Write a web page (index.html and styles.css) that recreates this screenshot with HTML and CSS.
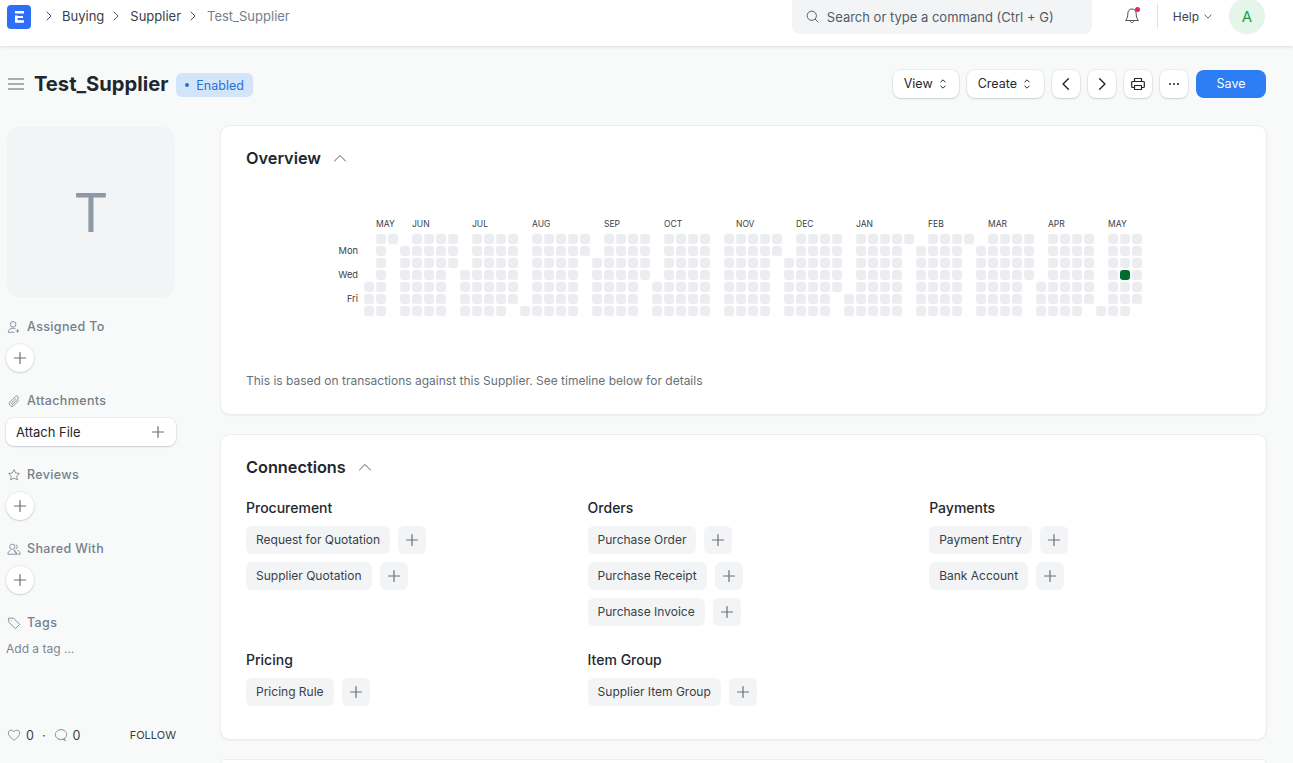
FILE: index.html
```html
<!DOCTYPE html>
<html lang="en">

<head>
  <title>Test_Supplier</title>
  <meta charset="utf-8" />
  <link rel="stylesheet" href="styles.css">
  <script src="heatmap.js" defer></script>
</head>

<body>
  <svg class="sprite" aria-hidden="true">
    <symbol id="icon-plus" viewBox="0 0 16 16">
      <path d="M8 2.500v11M2.500 8h11" fill="none" stroke="currentColor" stroke-width="1.200" stroke-linecap="round" />
    </symbol>
    <symbol id="icon-chevron" viewBox="0 0 12 12">
      <path d="M4 2l4 4-4 4" fill="none" stroke="currentColor" stroke-width="1" stroke-linecap="round" stroke-linejoin="round" />
    </symbol>
    <symbol id="icon-up" viewBox="0 0 14 8">
      <path d="M1.500 7L7 1.500 12.500 7" fill="none" stroke="currentColor" stroke-width="1" stroke-linecap="round" stroke-linejoin="round" />
    </symbol>
    <symbol id="icon-updown" viewBox="0 0 8 14">
      <path d="M1.800 5L4 2.800 6.200 5M1.800 9L4 11.200 6.200 9" fill="none" stroke="currentColor" stroke-width="1" stroke-linecap="round" stroke-linejoin="round" />
    </symbol>
  </svg>

  <header class="navbar">
    <div class="nav-left">
      <svg class="logo" viewBox="0 0 24 24">
        <rect width="24" height="24" rx="4" fill="#2d6ff6" />
        <path d="M8 6h9v2.500H8zM8 10.500h2.500V11H16v2h-5.500v2.300H17v2.400H8z" fill="#fff" />
      </svg>
      <nav class="crumbs">
        <svg class="crumb-sep"><use href="#icon-chevron" /></svg>
        <a>Buying</a>
        <svg class="crumb-sep"><use href="#icon-chevron" /></svg>
        <a>Supplier</a>
        <svg class="crumb-sep"><use href="#icon-chevron" /></svg>
        <a class="current">Test_Supplier</a>
      </nav>
    </div>
    <div class="nav-right">
      <div class="search">
        <svg class="search-icon" viewBox="0 0 14 14">
          <circle cx="6.200" cy="6.200" r="5" fill="none" stroke="currentColor" />
          <path d="M10 10l3 3" stroke="currentColor" stroke-linecap="round" />
        </svg>
        <span>Search or type a command (Ctrl + G)</span>
      </div>
      <div class="bell">
        <svg viewBox="0 0 16 18" width="16" height="18">
          <path d="M8 2c-2.800 0-4.200 2.200-4.200 4.800 0 3.200-.7 5-2.300 6.700h13c-1.600-1.700-2.300-3.500-2.300-6.700C12.200 4.200 10.800 2 8 2zM6.200 13.800c.1 2.400 3.500 2.400 3.600 0" fill="none" stroke="#4c5560" stroke-linejoin="round" />
        </svg>
        <span class="bell-dot"></span>
      </div>
      <div class="nav-divider"></div>
      <div class="help">Help
        <svg class="help-chevron" viewBox="0 0 10 6"><path d="M1 1l4 4 4-4" fill="none" stroke="currentColor" stroke-linecap="round" stroke-linejoin="round" /></svg>
      </div>
      <div class="avatar">A</div>
    </div>
  </header>

  <div class="page-head">
    <div class="page-title">
      <svg class="menu-icon" viewBox="0 0 16 12">
        <path d="M0 1h16M0 6h16M0 11h16" stroke="currentColor" stroke-width="1.500" />
      </svg>
      <h1>Test_Supplier</h1>
      <span class="badge"><i class="badge-dot"></i>Enabled</span>
    </div>
    <div class="actions">
      <button class="btn">View <svg class="updown"><use href="#icon-updown" /></svg></button>
      <button class="btn btn-create">Create <svg class="updown"><use href="#icon-updown" /></svg></button>
      <button class="btn btn-icon">
        <svg viewBox="0 0 12 12" width="14" height="14"><path d="M8 1.500L3.500 6 8 10.500" fill="none" stroke="#1f272e" stroke-width="1.200" stroke-linecap="round" stroke-linejoin="round" /></svg>
      </button>
      <button class="btn btn-icon">
        <svg viewBox="0 0 12 12" width="14" height="14"><path d="M4 1.500L8.500 6 4 10.500" fill="none" stroke="#1f272e" stroke-width="1.200" stroke-linecap="round" stroke-linejoin="round" /></svg>
      </button>
      <button class="btn btn-icon">
        <svg viewBox="0 0 14 14" width="14" height="14"><path d="M3.500 4.500V1.500h7v3M3.500 10.500H1.500a.8.8 0 0 1-.8-.8V5.300a.8.8 0 0 1 .8-.8h11a.8.8 0 0 1 .8.8v4.400a.8.8 0 0 1-.8.8h-2M3.500 8.500h7v4h-7z" fill="none" stroke="#1f272e" stroke-width="1.200" stroke-linejoin="round" /></svg>
      </button>
      <button class="btn btn-icon">
        <svg viewBox="0 0 14 4" width="14" height="4"><circle cx="3" cy="2" r="1" fill="#1f272e" /><circle cx="7" cy="2" r="1" fill="#1f272e" /><circle cx="11" cy="2" r="1" fill="#1f272e" /></svg>
      </button>
      <button class="btn btn-primary">Save</button>
    </div>
  </div>

  <div class="layout">
    <aside class="sidebar">
      <div class="image-box">T</div>

      <section class="side-section">
        <h4 class="side-label">
          <svg viewBox="0 0 16 16"><circle cx="7" cy="5" r="3.200" /><path d="M1.500 14c0-3 2.300-4.500 5.500-4.500 1 0 2 .2 2.800.5M1.500 14h7M12 10.500v4M10 12.500h4" /></svg>
          Assigned To
        </h4>
        <button class="round-add"><svg><use href="#icon-plus" /></svg></button>
      </section>

      <section class="side-section">
        <h4 class="side-label">
          <svg viewBox="0 0 16 16"><path d="M13.500 7.500l-5.700 5.700a3 3 0 0 1-4.300-4.300l6-6a2 2 0 0 1 2.900 2.900l-5.700 5.700a1 1 0 0 1-1.400-1.400l5.200-5.200" /></svg>
          Attachments
        </h4>
        <button class="attach-btn">Attach File <svg><use href="#icon-plus" /></svg></button>
      </section>

      <section class="side-section">
        <h4 class="side-label">
          <svg viewBox="0 0 16 16"><path d="M8 1.800l1.900 3.900 4.300.6-3.100 3 .7 4.300L8 11.600l-3.800 2 .7-4.300-3.100-3 4.300-.6z" stroke-linejoin="round" /></svg>
          Reviews
        </h4>
        <button class="round-add"><svg><use href="#icon-plus" /></svg></button>
      </section>

      <section class="side-section">
        <h4 class="side-label">
          <svg viewBox="0 0 16 16"><circle cx="6" cy="5.500" r="3" /><path d="M1 14c0-2.800 1.800-4.200 3-4.500M8 9.500c1.200.3 3 1.700 3 4.500zM1 14h10M10 2.800a3 3 0 0 1 0 5.400M12 9.500c1.400.4 3 1.700 3 4.500h-3" /></svg>
          Shared With
        </h4>
        <button class="round-add"><svg><use href="#icon-plus" /></svg></button>
      </section>

      <section class="side-section tags">
        <h4 class="side-label">
          <svg viewBox="0 0 16 16"><path d="M1.500 2.500h6l7 7-5 5-7-7zM5 5.500h.5" stroke-linejoin="round" /></svg>
          Tags
        </h4>
        <div class="add-tag">Add a tag ...</div>
      </section>

      <div class="side-foot">
        <span class="stat">
          <svg viewBox="0 0 16 16"><path d="M8 14S1.500 10 1.500 5.700C1.500 3.600 3 2.500 4.700 2.500 6 2.500 7.300 3.300 8 4.500c.7-1.200 2-2 3.300-2 1.700 0 3.200 1.100 3.200 3.200C14.500 10 8 14 8 14z" stroke-linejoin="round" /></svg>
          0
        </span>
        <span class="stat-dot">·</span>
        <span class="stat">
          <svg viewBox="0 0 16 16"><path d="M8 1.800c3.600 0 6.500 2.500 6.500 5.700s-2.900 5.700-6.500 5.700c-.9 0-1.800-.2-2.600-.4M12 12l1 2.500L10.500 13M8 1.800C4.400 1.800 1.500 4.300 1.500 7.500c0 2.300 1.500 4.300 3.900 5.300" stroke-linecap="round" /></svg>
          0
        </span>
        <span class="follow">FOLLOW</span>
      </div>
    </aside>

    <main class="main">
      <section class="card card-overview">
        <h2 class="card-title">Overview <svg class="collapse"><use href="#icon-up" /></svg></h2>
        <div class="heatmap" id="heatmap"></div>
        <p class="heat-note">This is based on transactions against this Supplier. See timeline below for details</p>
      </section>

      <section class="card card-connections">
        <h2 class="card-title">Connections <svg class="collapse"><use href="#icon-up" /></svg></h2>
        <div class="conn-grid">
          <div class="conn-group">
            <h3>Procurement</h3>
            <div class="conn-row"><a class="pill">Request for Quotation</a><a class="pill-add"><svg><use href="#icon-plus" /></svg></a></div>
            <div class="conn-row"><a class="pill">Supplier Quotation</a><a class="pill-add"><svg><use href="#icon-plus" /></svg></a></div>
          </div>
          <div class="conn-group">
            <h3>Orders</h3>
            <div class="conn-row"><a class="pill">Purchase Order</a><a class="pill-add"><svg><use href="#icon-plus" /></svg></a></div>
            <div class="conn-row"><a class="pill">Purchase Receipt</a><a class="pill-add"><svg><use href="#icon-plus" /></svg></a></div>
            <div class="conn-row"><a class="pill">Purchase Invoice</a><a class="pill-add"><svg><use href="#icon-plus" /></svg></a></div>
          </div>
          <div class="conn-group">
            <h3>Payments</h3>
            <div class="conn-row"><a class="pill">Payment Entry</a><a class="pill-add"><svg><use href="#icon-plus" /></svg></a></div>
            <div class="conn-row"><a class="pill">Bank Account</a><a class="pill-add"><svg><use href="#icon-plus" /></svg></a></div>
          </div>
          <div class="conn-group">
            <h3>Pricing</h3>
            <div class="conn-row"><a class="pill">Pricing Rule</a><a class="pill-add"><svg><use href="#icon-plus" /></svg></a></div>
          </div>
          <div class="conn-group">
            <h3>Item Group</h3>
            <div class="conn-row"><a class="pill">Supplier Item Group</a><a class="pill-add"><svg><use href="#icon-plus" /></svg></a></div>
          </div>
        </div>
      </section>

      <section class="card card-next"></section>
    </main>
  </div>
</body>

</html>
```

FILE: styles.css
```css
* {
  box-sizing: border-box;
}

body {
  margin: 0;
  height: 763px;
  overflow: hidden;
  background: #f8f9f9;
  color: #1f272e;
  font-family: "Inter", "Liberation Sans", sans-serif;
  font-size: 13px;
}

.sprite {
  display: none;
}

h1,
h2,
h3,
h4,
p {
  margin: 0;
}

button {
  font: inherit;
  color: inherit;
  cursor: pointer;
}

/* navbar */
.navbar {
  display: flex;
  justify-content: space-between;
  height: 46px;
  padding: 0 28px 0 7px;
  background: #fff;
  box-shadow: 0 1px 3px rgba(25, 39, 52, 0.13);
}

.nav-left,
.nav-right {
  display: flex;
  height: 32px;
  align-items: center;
}

.logo {
  width: 24px;
  height: 24px;
  margin-top: 2px;
}

.crumbs {
  display: flex;
  align-items: center;
  margin-left: 8px;
  color: #383f47;
}

.crumb-sep {
  width: 12px;
  height: 12px;
  margin: 0 7px 0 4px;
  color: #4c5560;
}

.crumbs a + .crumb-sep {
  margin-left: 6px;
  margin-right: 8px;
}

.crumbs .current {
  color: #74808b;
}

.search {
  display: flex;
  align-items: center;
  align-self: flex-start;
  width: 300px;
  height: 34px;
  padding: 0 0 1px 14px;
  border-radius: 0 0 8px 8px;
  background: #f3f4f6;
  color: #525c66;
}

.search-icon {
  width: 13px;
  height: 13px;
  margin-right: 8px;
  color: #4c5560;
}

.bell {
  position: relative;
  display: flex;
  margin-left: 32px;
}

.bell-dot {
  position: absolute;
  top: 0;
  right: 0;
  width: 5px;
  height: 5px;
  border-radius: 50%;
  background: #e8254f;
}

.nav-divider {
  width: 1px;
  height: 24px;
  margin: 0 15px 0 17px;
  background: #dfe2e5;
}

.help {
  display: flex;
  align-items: center;
  gap: 5px;
  font-size: 12px;
  color: #383f47;
}

.help-chevron {
  width: 8px;
  height: 5px;
  margin-top: 1px;
}

.avatar {
  display: flex;
  flex: none;
  align-items: center;
  justify-content: center;
  width: 36px;
  height: 36px;
  margin-left: 17px;
  border-radius: 50%;
  background: #e4f5e9;
  color: #16a34a;
  font-size: 15px;
}

/* page head */
.page-head {
  display: flex;
  align-items: center;
  justify-content: space-between;
  height: 28px;
  margin-top: 24px;
  padding: 0 27px 0 8px;
}

.page-title {
  display: flex;
  align-items: center;
}

.menu-icon {
  width: 16px;
  height: 12px;
  margin-right: 10px;
  color: #8a949e;
}

.page-title h1 {
  font-size: 20.150px;
  font-weight: 700;
  line-height: 28px;
}

.badge {
  display: flex;
  align-items: center;
  height: 24px;
  margin: 2px 0 0 8px;
  padding: 0 9px;
  border-radius: 6px;
  background: #d2e5fb;
  color: #2a6fd6;
  font-size: 12.500px;
}

.badge-dot {
  width: 4px;
  height: 4px;
  margin-right: 7px;
  border-radius: 50%;
  background: #2a6fd6;
}

.actions {
  display: flex;
  gap: 8px;
}

.btn {
  display: flex;
  align-items: center;
  justify-content: center;
  gap: 6px;
  height: 28px;
  padding: 0 12px 1px 11px;
  border: 0;
  border-radius: 8px;
  background: #fff;
  box-shadow: 0 0 0 1px rgba(25, 39, 52, 0.05), 0 1px 2px rgba(25, 39, 52, 0.15);
  font-size: 12.500px;
}

.btn-create {
  padding-right: 13px;
}

.btn-icon {
  width: 28px;
  padding: 0;
}

.btn-primary {
  width: 70px;
  padding: 0 0 1px;
  background: #2d7df4;
  color: #fff;
  box-shadow: none;
}

.updown {
  width: 8px;
  height: 14px;
}

/* layout */
.layout {
  display: flex;
  align-items: flex-start;
  margin-top: 29px;
  padding-left: 6px;
}

.sidebar {
  display: flex;
  flex-direction: column;
  flex: none;
  width: 171px;
  height: 620px;
}

.image-box {
  display: flex;
  align-items: center;
  justify-content: center;
  width: 168px;
  height: 170px;
  margin-left: 1px;
  border-radius: 12px;
  background: #f3f4f6;
  color: #8d99a6;
  font-size: 54px;
  font-weight: 400;
}

.side-section {
  height: 74px;
}

.image-box + .side-section {
  margin-top: 21px;
}

.side-label {
  display: flex;
  align-items: center;
  height: 17px;
  margin-bottom: 9px;
  color: #74808b;
  font-size: 12.500px;
  font-weight: 500;
  letter-spacing: 0.35px;
}

.side-label svg,
.stat svg {
  flex: none;
  width: 14px;
  height: 14px;
  fill: none;
  stroke: #7c8791;
  stroke-width: 1;
}

.side-label svg {
  margin: 0 6px 0 1px;
}

.round-add {
  display: flex;
  align-items: center;
  justify-content: center;
  width: 28px;
  height: 28px;
  padding: 0;
  border: 0;
  border-radius: 50%;
  background: #fff;
  color: #687178;
  box-shadow: 0 0 0 1px rgba(25, 39, 52, 0.05), 0 1px 2px rgba(25, 39, 52, 0.15);
}

.round-add svg,
.attach-btn svg,
.pill-add svg {
  width: 16px;
  height: 16px;
}

.attach-btn {
  display: flex;
  align-items: center;
  justify-content: space-between;
  width: 170px;
  height: 28px;
  padding: 0 10px;
  border: 0;
  border-radius: 8px;
  background: #fff;
  box-shadow: 0 0 0 1px rgba(25, 39, 52, 0.05), 0 1px 2px rgba(25, 39, 52, 0.15);
  font-size: 13px;
}

.attach-btn svg {
  color: #687178;
}

.add-tag {
  margin-top: 10px;
  color: #7c8791;
  font-size: 12px;
}

.tags {
  height: 112px;
}

.side-foot {
  display: flex;
  align-items: center;
  height: 18px;
  padding-left: 1px;
  color: #383f47;
  font-size: 12.500px;
}

.stat {
  display: flex;
  align-items: center;
  gap: 5px;
}

.stat-dot {
  margin: 0 8px;
}

.follow {
  margin-left: auto;
  padding-right: 1px;
  font-size: 11px;
}

/* cards */
.main {
  flex: none;
  width: 1047px;
  margin: -2px 0 0 43px;
}

.card {
  margin-bottom: 19px;
  padding: 22px 25px 0;
  border: 1px solid #ededed;
  border-radius: 10px;
  background: #fff;
  box-shadow: 0 1px 2px rgba(25, 39, 52, 0.05);
}

.card-overview {
  height: 290px;
}

.card-connections {
  height: 306px;
}

/* only the top of the next card is in view */
.card-next {
  height: 5px;
  margin-bottom: 0;
  padding: 0;
  border-bottom: 0;
  border-radius: 10px 10px 0 0;
  box-shadow: none;
}

.card-title {
  display: flex;
  align-items: center;
  height: 20px;
  font-size: 16.300px;
  font-weight: 600;
}

.collapse {
  width: 14px;
  height: 8px;
  margin-left: 12px;
  color: #525c66;
}

/* heatmap */
.heatmap {
  display: grid;
  grid-template-columns: 20px repeat(65, 10px);
  grid-template-rows: 13px repeat(7, 10px);
  gap: 2px;
  margin: 51px 0 0 96px;
}

.heat-cell {
  border-radius: 3px;
  background: #ebedf0;
}

.heat-cell.active {
  background: #006d2c;
}

.heat-month,
.heat-day {
  color: #383f47;
  line-height: 10px;
  white-space: nowrap;
}

.heat-month {
  font-size: 8.500px;
}

.heat-day {
  justify-self: end;
  margin-right: 4px;
  font-size: 9.300px;
}

.heat-note {
  margin-top: 56px;
  color: #687178;
  font-size: 12px;
  line-height: 18px;
}

/* connections */
.conn-grid {
  display: grid;
  grid-template-columns: repeat(3, 341.600px);
  grid-template-rows: 152px auto;
  margin-top: 22px;
}

.conn-group h3 {
  height: 18px;
  margin-bottom: 9px;
  font-size: 14px;
  font-weight: 500;
  line-height: 18px;
}

.conn-row {
  display: flex;
  gap: 8px;
  margin-bottom: 8px;
}

.pill,
.pill-add {
  display: flex;
  align-items: center;
  height: 28px;
  border-radius: 6px;
  background: #f3f4f6;
  color: #383f47;
}

.pill {
  padding: 0 10px 1px;
  font-size: 12px;
}

.pill-add {
  justify-content: center;
  width: 28px;
  color: #687178;
}
```

FILE: heatmap.js
```js
// one entry per week column: first and last filled day, "-" for a gap column
const weeks = ('4-6 0-6 0-0 1-6 0-6 0-6 0-6 0-2 3-6 0-6 0-6 0-6 0-5 6-6 0-6 0-6 0-6 0-6 0-1 2-6 0-6 0-6 0-6 0-3 4-6 ' +
  '0-6 0-6 0-6 0-6 - 0-6 0-6 0-6 0-6 0-1 2-6 0-6 0-6 0-6 0-4 5-6 0-6 0-6 0-6 0-6 0-0 1-6 0-6 0-6 0-6 0-0 1-6 ' +
  '0-6 0-6 0-6 0-3 4-6 0-6 0-6 0-6 0-5 6-6 0-6 0-6 0-5').split(' ');

const months = [
  ['MAY', 1], ['JUN', 4], ['JUL', 9], ['AUG', 14], ['SEP', 20], ['OCT', 25], ['NOV', 31],
  ['DEC', 36], ['JAN', 41], ['FEB', 47], ['MAR', 52], ['APR', 57], ['MAY', 62],
];

const days = [['Mon', 1], ['Wed', 3], ['Fri', 5]];

function addItem(parent, className, column, row, text) {
  const el = document.createElement('div');
  el.className = className;
  el.style.gridColumn = column;
  el.style.gridRow = row;
  if (text) el.textContent = text;
  parent.appendChild(el);
  return el;
}

function drawHeatmap() {
  const grid = document.getElementById('heatmap');

  months.forEach(([name, week]) => addItem(grid, 'heat-month', week + 2, 1, name));
  days.forEach(([name, day]) => addItem(grid, 'heat-day', 1, day + 2, name));

  weeks.forEach((week, i) => {
    if (week === '-') return;
    const [first, last] = week.split('-').map(Number);
    for (let d = first; d <= last; d++) {
      const cell = addItem(grid, 'heat-cell', i + 2, d + 2);
      // the one day with a transaction
      if (i === 63 && d === 3) cell.classList.add('active');
    }
  });
}

drawHeatmap();
```
